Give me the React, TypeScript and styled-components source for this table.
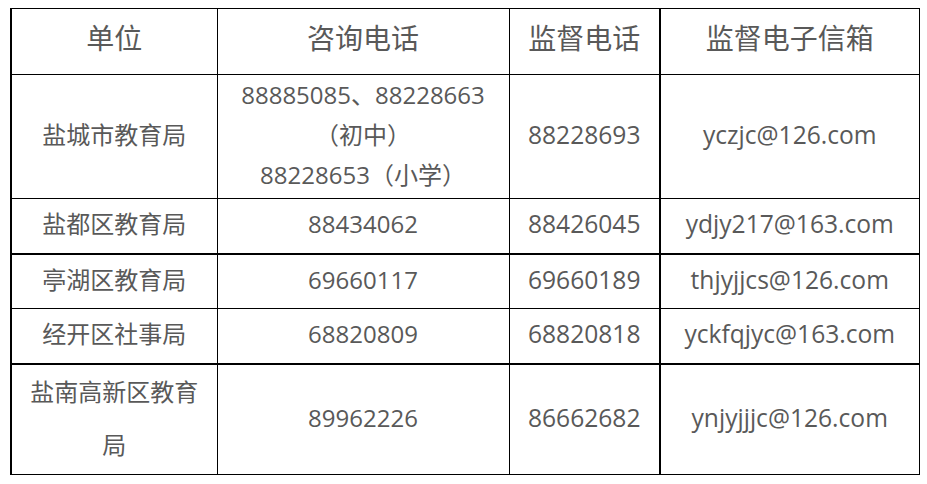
import React from "react";
import styled, { createGlobalStyle } from "styled-components";

const Global = createGlobalStyle`
  html, body { margin: 0; padding: 0; background: #ffffff; }
  body {
    font-family: "Open Sans", "Noto Sans CJK SC", sans-serif;
    color: #595959;
  }
`;

const Page = styled.div`
  padding: 8px 8px 0 10px;
`;

const Table = styled.table`
  width: 908px;
  border-collapse: collapse;
  table-layout: fixed;
`;

const HeadRow = styled.tr`
  height: 66px;
`;

const Row = styled.tr<{ $h: number }>`
  height: ${(p) => p.$h}px;
`;

type Edge = { $left?: number; $bottom?: number };

const Th = styled.th<Edge>`
  font-weight: 400;
  font-size: 28px;
  line-height: 36px;
  padding: 0 4px 8px;
  text-align: center;
  vertical-align: middle;
  color: #595959;
  border: 1px solid #000;
  border-left-width: ${(p) => p.$left ?? 1}px;
`;

const Td = styled.td<Edge & { $lh?: number }>`
  font-size: 24px;
  line-height: ${(p) => p.$lh ?? 40}px;
  padding: 0 10px 3px;
  text-align: center;
  vertical-align: middle;
  color: #595959;
  border: 1px solid #000;
  border-left-width: ${(p) => p.$left ?? 1}px;
  border-bottom-width: ${(p) => p.$bottom ?? 1}px;
  word-break: break-all;
`;

const Latin = styled.span`
  font-size: 24.6px;
`;

const Line = styled.div``;

type Entry = {
  unit: string;
  consult: string[];
  phone: string;
  mail: string;
  h: number;
  lh?: number;
  thick?: boolean;
};

const rows: Entry[] = [
  {
    unit: "盐城市教育局",
    consult: ["88885085、88228663", "（初中）", "88228653（小学）"],
    phone: "88228693",
    mail: "yczjc@126.com",
    h: 123,
  },
  { unit: "盐都区教育局", consult: ["88434062"], phone: "88426045", mail: "ydjy217@163.com", h: 55, thick: true },
  { unit: "亭湖区教育局", consult: ["69660117"], phone: "69660189", mail: "thjyjjcs@126.com", h: 55 },
  { unit: "经开区社事局", consult: ["68820809"], phone: "68820818", mail: "yckfqjyc@163.com", h: 55, thick: true },
  { unit: "盐南高新区教育局", consult: ["89962226"], phone: "86662682", mail: "ynjyjjjc@126.com", h: 108, lh: 53 },
];

export default function App() {
  return (
    <>
      <Global />
      <Page>
        <Table>
          <colgroup>
            <col style={{ width: 206 }} />
            <col style={{ width: 292 }} />
            <col style={{ width: 151 }} />
            <col style={{ width: 259 }} />
          </colgroup>
          <thead>
            <HeadRow>
              <Th $left={2}>单位</Th>
              <Th>咨询电话</Th>
              <Th>监督电话</Th>
              <Th $left={2}>监督电子信箱</Th>
            </HeadRow>
          </thead>
          <tbody>
            {rows.map((r) => (
              <Row key={r.unit} $h={r.h}>
                <Td $left={2} $lh={r.lh} $bottom={r.thick ? 2 : 1}>
                  {r.unit}
                </Td>
                <Td $bottom={r.thick ? 2 : 1}>
                  {r.consult.map((c) => (
                    <Line key={c}>{c}</Line>
                  ))}
                </Td>
                <Td $bottom={r.thick ? 2 : 1}>
                  <Latin>{r.phone}</Latin>
                </Td>
                <Td $left={2} $bottom={r.thick ? 2 : 1}>
                  <Latin>{r.mail}</Latin>
                </Td>
              </Row>
            ))}
          </tbody>
        </Table>
      </Page>
    </>
  );
}
